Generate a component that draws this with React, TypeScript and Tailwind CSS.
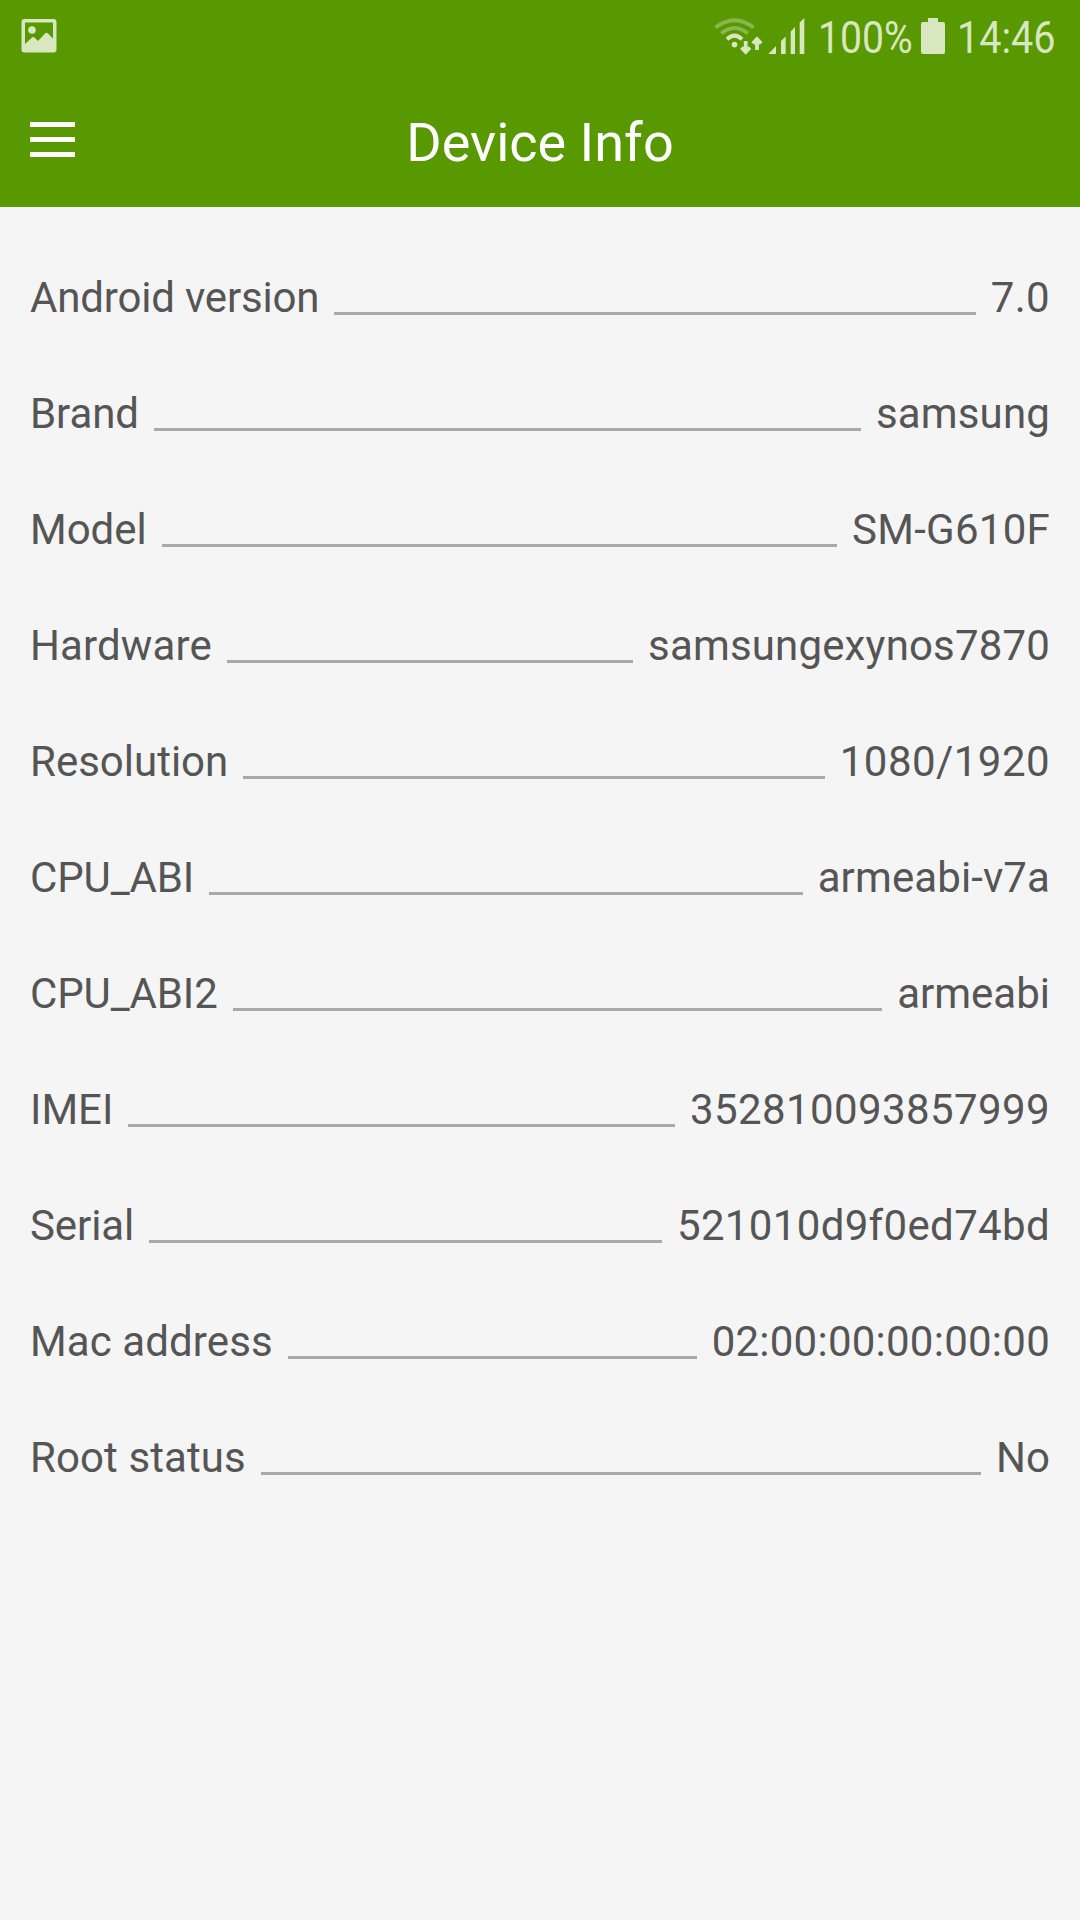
type Row = { label: string; value: string; labelClass?: string; valueClass?: string };

const rows: Row[] = [
  { label: "Android version", value: "7.0", labelClass: "tracking-[-0.18px]", valueClass: "tracking-[0.3px]" },
  { label: "Brand", value: "samsung", labelClass: "tracking-[-0.08px]", valueClass: "tracking-[0.15px]" },
  { label: "Model", value: "SM-G610F", valueClass: "tracking-[0.27px]" },
  { label: "Hardware", value: "samsungexynos7870", labelClass: "tracking-[0.12px]", valueClass: "tracking-[0.16px]" },
  { label: "Resolution", value: "1080/1920", valueClass: "tracking-[0.45px]" },
  { label: "CPU_ABI", value: "armeabi-v7a", labelClass: "tracking-[-0.12px]", valueClass: "tracking-[0.1px]" },
  { label: "CPU_ABI2", value: "armeabi", labelClass: "tracking-[-0.12px]" },
  { label: "IMEI", value: "352810093857999", valueClass: "tracking-[0.4px]" },
  { label: "Serial", value: "521010d9f0ed74bd", labelClass: "tracking-[-0.1px]", valueClass: "tracking-[0.34px]" },
  { label: "Mac address", value: "02:00:00:00:00:00", labelClass: "tracking-[0.1px]", valueClass: "tracking-[0.25px]" },
  { label: "Root status", value: "No", labelClass: "tracking-[0.1px]" },
];

function PictureIcon() {
  return (
    <svg width="36" height="34" viewBox="0 0 36 34" fill="currentColor">
      <path
        fillRule="evenodd"
        d="M3.5 0h29A3 3 0 0 1 35.500 3v27.500a3 3 0 0 1-3 3h-29a3 3 0 0 1-3-3V3a3 3 0 0 1 3-3zM4 3.500V25L11 18.500q1.200-1 2.400 0L17 22l7-7.500q1.500-1.500 3 0l5 5V3.500z"
      />
      <circle cx="11" cy="11" r="3.800" />
    </svg>
  );
}

function WifiIcon() {
  return (
    <svg width="50" height="40" viewBox="713 16 50 40" fill="none" stroke="currentColor">
      <path d="M715.500 27.500Q734.500 13 753.500 27.500" strokeWidth="4" opacity="0.4" />
      <path d="M721.200 33.500Q734.500 22.500 747.800 33.500" strokeWidth="4" opacity="0.4" />
      <path d="M727 39.200Q734.500 32 742 39.200" strokeWidth="4" />
      <circle cx="734.500" cy="44.600" r="2.800" fill="currentColor" stroke="none" />
      <path d="M745.700 41v10M741.500 47.500l4.200 4.500 4.200-4.500M757 50V40M752.800 43.500l4.200-4.500 4.200 4.500" strokeWidth="3.800" />
    </svg>
  );
}

function SignalIcon() {
  return (
    <svg width="37" height="40" viewBox="768 16 37 40" fill="currentColor">
      <path d="M768.300 54l7.700-8v8zM781 41l4.700-4.500V54H781zM790.700 31.500L795 27v27h-4.300zM799.700 22.500l4.600-4.500v36h-4.600z" />
    </svg>
  );
}

function BatteryIcon() {
  return (
    <svg width="24" height="36" viewBox="0 0 24 36" fill="currentColor">
      <path d="M7 0h10v4h5a2 2 0 0 1 2 2v28a2 2 0 0 1-2 2H2a2 2 0 0 1-2-2V6a2 2 0 0 1 2-2h5z" />
    </svg>
  );
}

function StatusBar() {
  return (
    <div className="flex h-[72px] items-center justify-between pl-[21px] pr-[23px] text-[#d8e7c0]">
      <PictureIcon />
      <div className="flex h-full items-center">
        <WifiIcon />
        <span className="ml-[5px]">
          <SignalIcon />
        </span>
        <span className="ml-[13px] w-[94px] origin-left scale-x-[0.87] whitespace-nowrap pt-0.5 text-[45px] leading-none">100%</span>
        <span className="ml-[9px]">
          <BatteryIcon />
        </span>
        <span className="ml-[12px] w-[100px] origin-left scale-x-[0.88] whitespace-nowrap pt-0.5 text-[45px] leading-none">14:46</span>
      </div>
    </div>
  );
}

export default function App() {
  return (
    <div className="h-[1920px] w-[1080px] bg-[#f5f5f5] font-['Roboto',sans-serif]">
      <header className="h-[207px] bg-[#589800]">
        <StatusBar />
        <div className="grid h-[135px] grid-cols-3 items-center px-[30px] text-white">
          <div className="flex w-[45px] flex-col gap-2.5">
            <div className="h-[5px] bg-white" />
            <div className="h-[5px] bg-white" />
            <div className="h-[5px] bg-white" />
          </div>
          <h1 className="pt-1.5 text-center text-[54px] leading-none">Device Info</h1>
        </div>
      </header>
      <main className="px-[30px] pt-[33px]">
        {rows.map(({ label, value, labelClass, valueClass }) => (
          <div key={label} className="flex h-[116px] items-center text-[42px] leading-none text-[#555]">
            <span className={labelClass}>{label}</span>
            <div className="mx-[15px] mt-[30px] h-[3px] flex-1 bg-[#a9a9a9]" />
            <span className={valueClass}>{value}</span>
          </div>
        ))}
      </main>
    </div>
  );
}
